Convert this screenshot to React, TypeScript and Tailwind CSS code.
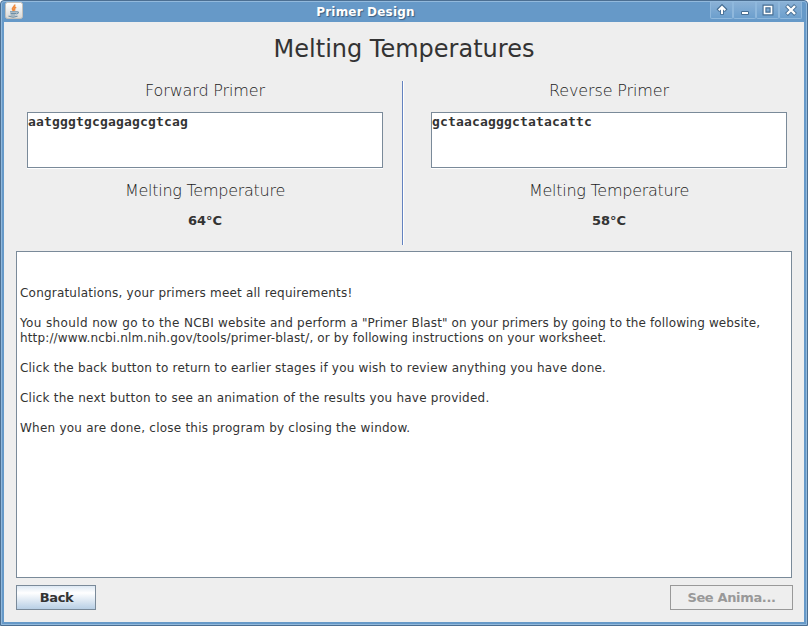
import type { ReactNode } from "react";

function TitleButton({ children }: { children: ReactNode }) {
  return (
    <span className="flex h-[17px] w-[23px] items-center justify-center rounded-b-[2px] border border-t-0 border-[#8fb8dc] bg-gradient-to-b from-[#8ab1d6] to-[#6c9fcd]">
      {children}
    </span>
  );
}

function JavaIcon() {
  return (
    <svg width="18" height="18" viewBox="0 0 18 18">
      <defs>
        <linearGradient id="tile" x1="0" y1="0" x2="0" y2="1">
          <stop offset="0" stopColor="#ffffff" />
          <stop offset="1" stopColor="#d8d8d6" />
        </linearGradient>
      </defs>
      <rect x="0.5" y="0.5" width="17" height="16" rx="2" fill="url(#tile)" stroke="#c4c0ba" />
      <path d="M9.600 2.500c1 2.200-3.200 3-2 5 .5.800.9.900 1 1.700M11.200 5.200c-2.200.8-2.200 1.800-1.300 3.500" fill="none" stroke="#f08a3c" strokeWidth="1.700" />
      <path d="M5 9.800h6.500M5.500 11.500h5.500M11.500 9.800c3-.5 2 2-.5 2.200M3.500 14c3 1.300 7 1 9 0M5.500 13h5" fill="none" stroke="#6f8fa6" strokeWidth="1.200" />
    </svg>
  );
}

function Primer({ title, sequence, temperature }: { title: string; sequence: string; temperature: string }) {
  return (
    <section className="flex w-[356px] flex-col items-center">
      <h2 className="h-[31px] pt-px text-[16px] leading-[18px] font-extralight tracking-[-0.140px] text-[#1c1c1c]">{title}</h2>
      <div className="h-[57px] w-full border-r border-b border-white">
        <div className="h-[56px] w-[356px] border border-[#7a8a99] bg-white pt-px font-['DejaVu_Sans_Mono',monospace] text-[13px] leading-[15px] font-bold tracking-[0.173px]">
          {sequence}
        </div>
      </div>
      <h3 className="mt-[12px] text-[16px] leading-[20px] font-extralight tracking-[-0.260px] text-[#1c1c1c]">Melting Temperature</h3>
      <p className="mt-[12px] text-[13px] leading-[16px] font-bold">{temperature}</p>
    </section>
  );
}

export default function App() {
  return (
    <div className="flex h-[626px] w-[808px] flex-col overflow-hidden rounded-t-[4px] border border-[#4c6f92] bg-[#6699c8] font-['DejaVu_Sans',sans-serif] text-[#333333]">
      <div className="flex grow flex-col rounded-t-[3px] border border-[#92b9dc] px-[2px] pb-[2px]">
        <header className="flex h-[20px] items-start pr-[2px] pl-[1px]">
          <JavaIcon />
          <h1 className="grow pr-[2px] text-center text-[12px] leading-[20px] font-bold tracking-[0.180px] text-white [text-shadow:1px_1px_1px_#3d5f80]">Primer Design</h1>
          <div className="flex justify-end">
            <TitleButton>
              <svg width="12" height="12" viewBox="0 0 12 12"><path d="M6 10.800V4M1.800 6.700 6 2.500 10.200 6.700" fill="none" stroke="#456d92" strokeWidth="3.800" /><path d="M6 10V3M2.700 6.300 6 3 9.300 6.300" fill="none" stroke="white" strokeWidth="2" /></svg>
            </TitleButton>
            <TitleButton>
              <svg width="12" height="12" viewBox="0 0 12 12"><path d="M2.500 7.500h7v3h-7z" fill="white" stroke="#456d92" /></svg>
            </TitleButton>
            <TitleButton>
              <svg width="12" height="12" viewBox="0 0 12 12"><path d="M2.500 2.500h7v7h-7z" fill="none" stroke="#456d92" strokeWidth="4" /><path d="M2.500 2.500h7v7h-7z" fill="none" stroke="white" strokeWidth="1.700" /></svg>
            </TitleButton>
            <TitleButton>
              <svg width="12" height="12" viewBox="0 0 12 12"><path d="m1.500 1.500 9 9M10.500 1.500l-9 9" fill="none" stroke="#456d92" strokeWidth="4" /><path d="m2 2 8 8M10 2 2 10" fill="none" stroke="white" strokeWidth="2.400" /></svg>
            </TitleButton>
          </div>
        </header>
        <main className="flex grow flex-col bg-[#eeeeee] px-[12px]">
          <h2 className="mt-[12px] text-center text-[24px] leading-[30px]">Melting Temperatures</h2>
          <div className="mt-[17px] flex h-[164px] pl-[11px]">
            <Primer title="Forward Primer" sequence="aatgggtgcgagagcgtcag" temperature="64°C" />
            <div className="mr-[27px] ml-[19px] w-[2px] border-l border-[#6382bf] bg-white" />
            <Primer title="Reverse Primer" sequence="gctaacagggctatacattc" temperature="58°C" />
          </div>
          <div className="mt-[6px] h-[327px] w-[776px] border border-[#7a8a99] bg-white pt-[34px] pl-[3px] text-[12px] leading-[15px] whitespace-nowrap">
            <p className="tracking-[0.205px]">Congratulations, your primers meet all requirements!</p>
            <p className="mt-[15px] tracking-[0.115px]">
              <span className="tracking-[0.370px]">You should now go to the </span>
              <span className="tracking-[0.200px]">NCBI website and perform a </span>
              "Primer Blast" on your primers by going to the following website,
            </p>
            <p className="tracking-[0.145px]">http://www.ncbi.nlm.nih.gov/tools/primer-blast/, or by following instructions on your worksheet.</p>
            <p className="mt-[15px] tracking-[0.203px]">Click the back button to return to earlier stages if you wish to review anything you have done.</p>
            <p className="mt-[15px] tracking-[0.235px]">Click the next button to see an animation of the results you have provided.</p>
            <p className="mt-[15px] tracking-[0.230px]">When you are done, close this program by closing the window.</p>
          </div>
          <div className="mt-[7px] flex justify-between text-[13px] font-bold">
            <button className="h-[25px] w-[80px] border border-[#7a8a99] bg-gradient-to-b from-[#dde8f3] via-white via-30% to-[#b8cfe5] pl-px tracking-[-0.400px]">Back</button>
            <button disabled className="-mr-px h-[25px] w-[123px] border border-[#999999] tracking-[-0.350px] text-[#999999]">See Anima...</button>
          </div>
        </main>
      </div>
    </div>
  );
}
